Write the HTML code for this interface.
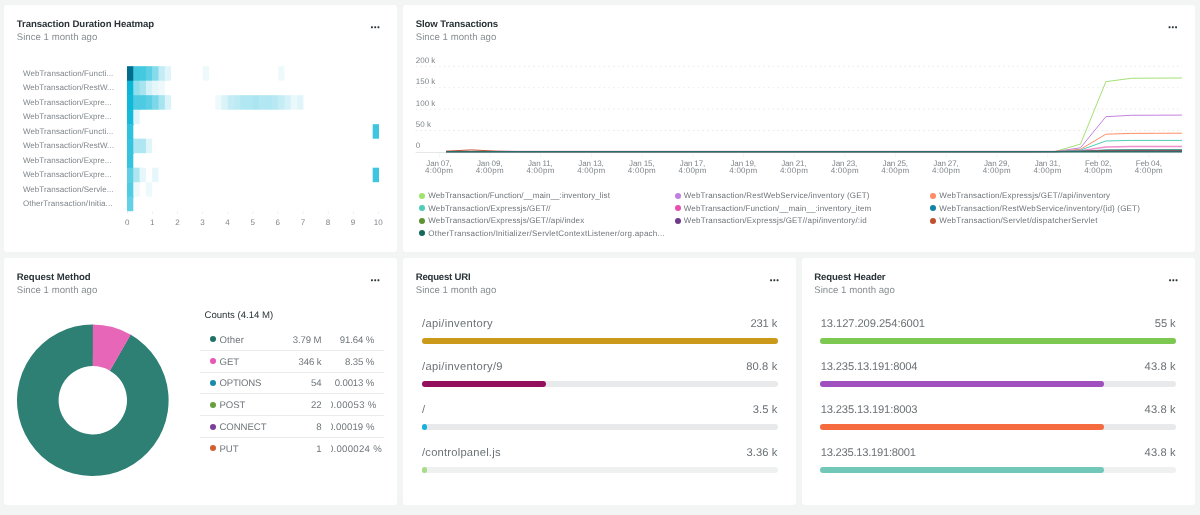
<!DOCTYPE html>
<html lang="en"><head><meta charset="utf-8"><title>Dashboard</title>
<style>
html,body{margin:0;padding:0;}
body{width:1200px;height:515px;background:#f3f4f4;font-family:"Liberation Sans", sans-serif;position:relative;overflow:hidden;}
#root{position:absolute;left:0;top:0;width:1200px;height:515px;will-change:transform;}
.panel{position:absolute;background:#fff;border-radius:3px;overflow:hidden;}
.t{position:absolute;white-space:pre;text-rendering:geometricPrecision;font-family:"Liberation Sans", sans-serif;}
.track{position:absolute;height:6px;border-radius:3px;background:#e8e9ea;}
.fill{position:absolute;left:0;top:0;height:6px;border-radius:3px;}
svg{position:absolute;left:0;top:0;overflow:visible;}
svg.dots{left:auto;top:auto;}
.sep{position:absolute;height:1px;background:#e9ebeb;}
.ld{position:absolute;width:6px;height:6px;border-radius:50%;}
</style></head><body>
<div id="root">
<div class="panel" style="left:4px;top:5px;width:393px;height:246.7px;"><span class="t" style="left:12.70px;top:14px;font-size:9.6px;line-height:11.925px;color:#293338;font-weight:700;letter-spacing:-0.059px;">Transaction Duration Heatmap</span><span class="t" style="left:12.70px;top:27px;font-size:9.6px;line-height:11.925px;color:#878e91;letter-spacing:0.040px;">Since 1 month ago</span><svg class="dots" width="12" height="4" viewBox="0 0 12 4" style="left:367px;top:20px;"><g fill="#2c353a"><rect x="0.00" y="1.25" width="1.9" height="1.9" rx="0.45"/><rect x="3.25" y="1.25" width="1.9" height="1.9" rx="0.45"/><rect x="6.50" y="1.25" width="1.9" height="1.9" rx="0.45"/></g></svg><span class="t" style="left:18.90px;top:64px;font-size:8px;line-height:10.137px;color:#7e8589;letter-spacing:0.080px;">WebTransaction/Functi...</span><span class="t" style="left:18.90px;top:78px;font-size:8px;line-height:10.137px;color:#7e8589;letter-spacing:0.032px;">WebTransaction/RestW...</span><span class="t" style="left:18.90px;top:93px;font-size:8px;line-height:10.137px;color:#7e8589;letter-spacing:0.048px;">WebTransaction/Expre...</span><span class="t" style="left:18.90px;top:107px;font-size:8px;line-height:10.137px;color:#7e8589;letter-spacing:0.048px;">WebTransaction/Expre...</span><span class="t" style="left:18.90px;top:122px;font-size:8px;line-height:10.137px;color:#7e8589;letter-spacing:0.080px;">WebTransaction/Functi...</span><span class="t" style="left:18.90px;top:136px;font-size:8px;line-height:10.137px;color:#7e8589;letter-spacing:0.032px;">WebTransaction/RestW...</span><span class="t" style="left:18.90px;top:151px;font-size:8px;line-height:10.137px;color:#7e8589;letter-spacing:0.048px;">WebTransaction/Expre...</span><span class="t" style="left:18.90px;top:165px;font-size:8px;line-height:10.137px;color:#7e8589;letter-spacing:0.048px;">WebTransaction/Expre...</span><span class="t" style="left:18.90px;top:180px;font-size:8px;line-height:10.137px;color:#7e8589;letter-spacing:0.051px;">WebTransaction/Servle...</span><span class="t" style="left:18.90px;top:194px;font-size:8px;line-height:10.137px;color:#7e8589;letter-spacing:0.089px;">OtherTransaction/Initia...</span><span class="t" style="left:120.97px;top:213px;font-size:8px;line-height:10.137px;color:#7e8589;">0</span><span class="t" style="left:146.07px;top:213px;font-size:8px;line-height:10.137px;color:#7e8589;">1</span><span class="t" style="left:171.17px;top:213px;font-size:8px;line-height:10.137px;color:#7e8589;">2</span><span class="t" style="left:196.27px;top:213px;font-size:8px;line-height:10.137px;color:#7e8589;">3</span><span class="t" style="left:221.37px;top:213px;font-size:8px;line-height:10.137px;color:#7e8589;">4</span><span class="t" style="left:246.47px;top:213px;font-size:8px;line-height:10.137px;color:#7e8589;">5</span><span class="t" style="left:271.57px;top:213px;font-size:8px;line-height:10.137px;color:#7e8589;">6</span><span class="t" style="left:296.67px;top:213px;font-size:8px;line-height:10.137px;color:#7e8589;">7</span><span class="t" style="left:321.77px;top:213px;font-size:8px;line-height:10.137px;color:#7e8589;">8</span><span class="t" style="left:346.87px;top:213px;font-size:8px;line-height:10.137px;color:#7e8589;">9</span><span class="t" style="left:369.75px;top:213px;font-size:8px;line-height:10.137px;color:#7e8589;">10</span><svg width="393" height="246.7" viewBox="4 5 393 246.7"><rect x="127.00" y="66.20" width="6.90" height="15.10" fill="#006d8c"/><rect x="133.30" y="66.20" width="6.90" height="15.10" fill="#3fc8e0"/><rect x="139.60" y="66.20" width="6.90" height="15.10" fill="#44c9e1"/><rect x="145.90" y="66.20" width="6.90" height="15.10" fill="#5ccfe4"/><rect x="152.20" y="66.20" width="6.90" height="15.10" fill="#85dbeb"/><rect x="158.50" y="66.20" width="6.90" height="15.10" fill="#c3ecf4"/><rect x="164.80" y="66.20" width="6.30" height="14.50" fill="#dff5f9"/><rect x="202.60" y="66.20" width="6.30" height="14.50" fill="#eef9fc"/><rect x="278.20" y="66.20" width="6.30" height="14.50" fill="#eef9fc"/><rect x="127.00" y="80.70" width="6.90" height="15.10" fill="#0ab5d6"/><rect x="133.30" y="80.70" width="6.90" height="15.10" fill="#8fdeed"/><rect x="139.60" y="80.70" width="6.90" height="15.10" fill="#a6e4f0"/><rect x="145.90" y="80.70" width="6.90" height="15.10" fill="#d4f1f7"/><rect x="152.20" y="80.70" width="6.90" height="15.10" fill="#e6f7fa"/><rect x="158.50" y="80.70" width="6.30" height="15.10" fill="#edf9fb"/><rect x="127.00" y="95.20" width="6.90" height="15.10" fill="#10b7d7"/><rect x="133.30" y="95.20" width="6.90" height="15.10" fill="#4ccbe2"/><rect x="139.60" y="95.20" width="6.90" height="14.50" fill="#4ccbe2"/><rect x="145.90" y="95.20" width="6.90" height="14.50" fill="#5ccfe4"/><rect x="152.20" y="95.20" width="6.90" height="14.50" fill="#7ad8e9"/><rect x="158.50" y="95.20" width="6.90" height="14.50" fill="#a6e4f0"/><rect x="164.80" y="95.20" width="6.30" height="14.50" fill="#d9f3f8"/><rect x="215.20" y="95.20" width="6.90" height="14.50" fill="#eef9fc"/><rect x="221.50" y="95.20" width="6.90" height="14.50" fill="#daf3f8"/><rect x="227.80" y="95.20" width="6.90" height="14.50" fill="#c3ecf5"/><rect x="234.10" y="95.20" width="6.90" height="14.50" fill="#bcebf4"/><rect x="240.40" y="95.20" width="6.90" height="14.50" fill="#b0e7f2"/><rect x="246.70" y="95.20" width="6.90" height="14.50" fill="#b0e7f2"/><rect x="253.00" y="95.20" width="6.90" height="14.50" fill="#aae5f1"/><rect x="259.30" y="95.20" width="6.90" height="14.50" fill="#b3e8f3"/><rect x="265.60" y="95.20" width="6.90" height="14.50" fill="#b0e7f2"/><rect x="271.90" y="95.20" width="6.90" height="14.50" fill="#b8e9f3"/><rect x="278.20" y="95.20" width="6.90" height="14.50" fill="#c5edf5"/><rect x="284.50" y="95.20" width="6.90" height="14.50" fill="#d5f2f8"/><rect x="290.80" y="95.20" width="6.90" height="14.50" fill="#e8f8fb"/><rect x="297.10" y="95.20" width="6.30" height="14.50" fill="#e0f5fa"/><rect x="127.00" y="109.70" width="6.90" height="15.10" fill="#17b9d8"/><rect x="133.30" y="109.70" width="6.30" height="14.50" fill="#e0f5f9"/><rect x="127.00" y="124.20" width="6.30" height="15.10" fill="#2fc2dc"/><rect x="372.70" y="124.20" width="6.30" height="14.50" fill="#3fc5df"/><rect x="127.00" y="138.70" width="6.90" height="15.10" fill="#35c3dd"/><rect x="133.30" y="138.70" width="6.90" height="14.50" fill="#aee6f1"/><rect x="139.60" y="138.70" width="6.90" height="14.50" fill="#aee6f1"/><rect x="145.90" y="138.70" width="6.30" height="14.50" fill="#e0f5fa"/><rect x="127.00" y="153.20" width="6.30" height="15.10" fill="#35c3dd"/><rect x="127.00" y="167.70" width="6.90" height="15.10" fill="#5ccfe4"/><rect x="133.30" y="167.70" width="6.90" height="15.10" fill="#aee6f1"/><rect x="139.60" y="167.70" width="6.30" height="14.50" fill="#e6f7fb"/><rect x="152.20" y="167.70" width="6.30" height="14.50" fill="#e6f7fb"/><rect x="372.70" y="167.70" width="6.30" height="14.50" fill="#3fc5df"/><rect x="127.00" y="182.20" width="6.90" height="15.10" fill="#50cce2"/><rect x="133.30" y="182.20" width="6.30" height="14.50" fill="#eef9fc"/><rect x="145.90" y="182.20" width="6.30" height="14.50" fill="#eef9fc"/><rect x="127.00" y="196.70" width="6.30" height="14.50" fill="#62d1e5"/><rect x="127.00" y="211.6" width="0.8" height="2" fill="#e3e5e5"/><rect x="152.10" y="211.6" width="0.8" height="2" fill="#e3e5e5"/><rect x="177.20" y="211.6" width="0.8" height="2" fill="#e3e5e5"/><rect x="202.30" y="211.6" width="0.8" height="2" fill="#e3e5e5"/><rect x="227.40" y="211.6" width="0.8" height="2" fill="#e3e5e5"/><rect x="252.50" y="211.6" width="0.8" height="2" fill="#e3e5e5"/><rect x="277.60" y="211.6" width="0.8" height="2" fill="#e3e5e5"/><rect x="302.70" y="211.6" width="0.8" height="2" fill="#e3e5e5"/><rect x="327.80" y="211.6" width="0.8" height="2" fill="#e3e5e5"/><rect x="352.90" y="211.6" width="0.8" height="2" fill="#e3e5e5"/><rect x="378.00" y="211.6" width="0.8" height="2" fill="#e3e5e5"/></svg></div>
<div class="panel" style="left:403px;top:5px;width:791.5px;height:246.7px;"><span class="t" style="left:12.70px;top:14px;font-size:9.6px;line-height:11.925px;color:#293338;font-weight:700;letter-spacing:-0.109px;">Slow Transactions</span><span class="t" style="left:12.70px;top:27px;font-size:9.6px;line-height:11.925px;color:#878e91;letter-spacing:0.040px;">Since 1 month ago</span><svg class="dots" width="12" height="4" viewBox="0 0 12 4" style="left:765px;top:20px;"><g fill="#2c353a"><rect x="0.60" y="1.25" width="1.9" height="1.9" rx="0.45"/><rect x="3.85" y="1.25" width="1.9" height="1.9" rx="0.45"/><rect x="7.10" y="1.25" width="1.9" height="1.9" rx="0.45"/></g></svg><span class="t" style="left:12.80px;top:51px;font-size:8px;line-height:10.137px;color:#7e8589;">200 k</span><span class="t" style="left:12.80px;top:72px;font-size:8px;line-height:10.137px;color:#7e8589;">150 k</span><span class="t" style="left:12.80px;top:94px;font-size:8px;line-height:10.137px;color:#7e8589;">100 k</span><span class="t" style="left:12.80px;top:115px;font-size:8px;line-height:10.137px;color:#7e8589;">50 k</span><span class="t" style="left:12.80px;top:136px;font-size:8px;line-height:10.137px;color:#7e8589;">0</span><span class="t" style="left:23.27px;top:154px;font-size:8px;line-height:10.137px;color:#7e8589;letter-spacing:-0.131px;">Jan 07,</span><span class="t" style="left:22.03px;top:161px;font-size:8px;line-height:10.137px;color:#7e8589;letter-spacing:0.252px;">4:00pm</span><span class="t" style="left:73.97px;top:154px;font-size:8px;line-height:10.137px;color:#7e8589;letter-spacing:-0.131px;">Jan 09,</span><span class="t" style="left:72.73px;top:161px;font-size:8px;line-height:10.137px;color:#7e8589;letter-spacing:0.252px;">4:00pm</span><span class="t" style="left:124.96px;top:154px;font-size:8px;line-height:10.137px;color:#7e8589;letter-spacing:-0.128px;">Jan 11,</span><span class="t" style="left:123.43px;top:161px;font-size:8px;line-height:10.137px;color:#7e8589;letter-spacing:0.252px;">4:00pm</span><span class="t" style="left:175.37px;top:154px;font-size:8px;line-height:10.137px;color:#7e8589;letter-spacing:-0.131px;">Jan 13,</span><span class="t" style="left:174.13px;top:161px;font-size:8px;line-height:10.137px;color:#7e8589;letter-spacing:0.252px;">4:00pm</span><span class="t" style="left:226.07px;top:154px;font-size:8px;line-height:10.137px;color:#7e8589;letter-spacing:-0.131px;">Jan 15,</span><span class="t" style="left:224.83px;top:161px;font-size:8px;line-height:10.137px;color:#7e8589;letter-spacing:0.252px;">4:00pm</span><span class="t" style="left:276.77px;top:154px;font-size:8px;line-height:10.137px;color:#7e8589;letter-spacing:-0.131px;">Jan 17,</span><span class="t" style="left:275.53px;top:161px;font-size:8px;line-height:10.137px;color:#7e8589;letter-spacing:0.252px;">4:00pm</span><span class="t" style="left:327.47px;top:154px;font-size:8px;line-height:10.137px;color:#7e8589;letter-spacing:-0.131px;">Jan 19,</span><span class="t" style="left:326.23px;top:161px;font-size:8px;line-height:10.137px;color:#7e8589;letter-spacing:0.252px;">4:00pm</span><span class="t" style="left:378.17px;top:154px;font-size:8px;line-height:10.137px;color:#7e8589;letter-spacing:-0.131px;">Jan 21,</span><span class="t" style="left:376.93px;top:161px;font-size:8px;line-height:10.137px;color:#7e8589;letter-spacing:0.252px;">4:00pm</span><span class="t" style="left:428.87px;top:154px;font-size:8px;line-height:10.137px;color:#7e8589;letter-spacing:-0.131px;">Jan 23,</span><span class="t" style="left:427.63px;top:161px;font-size:8px;line-height:10.137px;color:#7e8589;letter-spacing:0.252px;">4:00pm</span><span class="t" style="left:479.57px;top:154px;font-size:8px;line-height:10.137px;color:#7e8589;letter-spacing:-0.131px;">Jan 25,</span><span class="t" style="left:478.33px;top:161px;font-size:8px;line-height:10.137px;color:#7e8589;letter-spacing:0.252px;">4:00pm</span><span class="t" style="left:530.27px;top:154px;font-size:8px;line-height:10.137px;color:#7e8589;letter-spacing:-0.131px;">Jan 27,</span><span class="t" style="left:529.03px;top:161px;font-size:8px;line-height:10.137px;color:#7e8589;letter-spacing:0.252px;">4:00pm</span><span class="t" style="left:580.97px;top:154px;font-size:8px;line-height:10.137px;color:#7e8589;letter-spacing:-0.131px;">Jan 29,</span><span class="t" style="left:579.73px;top:161px;font-size:8px;line-height:10.137px;color:#7e8589;letter-spacing:0.252px;">4:00pm</span><span class="t" style="left:631.67px;top:154px;font-size:8px;line-height:10.137px;color:#7e8589;letter-spacing:-0.131px;">Jan 31,</span><span class="t" style="left:630.43px;top:161px;font-size:8px;line-height:10.137px;color:#7e8589;letter-spacing:0.252px;">4:00pm</span><span class="t" style="left:681.94px;top:154px;font-size:8px;line-height:10.137px;color:#7e8589;letter-spacing:-0.136px;">Feb 02,</span><span class="t" style="left:681.13px;top:161px;font-size:8px;line-height:10.137px;color:#7e8589;letter-spacing:0.252px;">4:00pm</span><span class="t" style="left:732.64px;top:154px;font-size:8px;line-height:10.137px;color:#7e8589;letter-spacing:-0.136px;">Feb 04,</span><span class="t" style="left:731.83px;top:161px;font-size:8px;line-height:10.137px;color:#7e8589;letter-spacing:0.252px;">4:00pm</span><svg width="791.5" height="246.7" viewBox="403 5 791.5 246.7" fill="none"><line x1="415.6" y1="66.3" x2="1182" y2="66.3" stroke="#e6e9e9" stroke-width="1" stroke-dasharray="1.5 3.2"/><line x1="415.6" y1="87.7" x2="1182" y2="87.7" stroke="#e6e9e9" stroke-width="1" stroke-dasharray="1.5 3.2"/><line x1="415.6" y1="109.1" x2="1182" y2="109.1" stroke="#e6e9e9" stroke-width="1" stroke-dasharray="1.5 3.2"/><line x1="415.6" y1="130.5" x2="1182" y2="130.5" stroke="#e6e9e9" stroke-width="1" stroke-dasharray="1.5 3.2"/><line x1="415.6" y1="152.5" x2="1182" y2="152.5" stroke="#e6e8e8" stroke-width="1"/><line x1="439.3" y1="153" x2="439.3" y2="157.5" stroke="#f3f5f5" stroke-width="1"/><line x1="490.0" y1="153" x2="490.0" y2="157.5" stroke="#f3f5f5" stroke-width="1"/><line x1="540.7" y1="153" x2="540.7" y2="157.5" stroke="#f3f5f5" stroke-width="1"/><line x1="591.4" y1="153" x2="591.4" y2="157.5" stroke="#f3f5f5" stroke-width="1"/><line x1="642.1" y1="153" x2="642.1" y2="157.5" stroke="#f3f5f5" stroke-width="1"/><line x1="692.8" y1="153" x2="692.8" y2="157.5" stroke="#f3f5f5" stroke-width="1"/><line x1="743.5" y1="153" x2="743.5" y2="157.5" stroke="#f3f5f5" stroke-width="1"/><line x1="794.2" y1="153" x2="794.2" y2="157.5" stroke="#f3f5f5" stroke-width="1"/><line x1="844.9" y1="153" x2="844.9" y2="157.5" stroke="#f3f5f5" stroke-width="1"/><line x1="895.6" y1="153" x2="895.6" y2="157.5" stroke="#f3f5f5" stroke-width="1"/><line x1="946.3" y1="153" x2="946.3" y2="157.5" stroke="#f3f5f5" stroke-width="1"/><line x1="997.0" y1="153" x2="997.0" y2="157.5" stroke="#f3f5f5" stroke-width="1"/><line x1="1047.7" y1="153" x2="1047.7" y2="157.5" stroke="#f3f5f5" stroke-width="1"/><line x1="1098.4" y1="153" x2="1098.4" y2="157.5" stroke="#f3f5f5" stroke-width="1"/><line x1="1149.1" y1="153" x2="1149.1" y2="157.5" stroke="#f3f5f5" stroke-width="1"/><polyline points="446.0,151.6 471.4,151.6 496.8,151.6 522.1,151.6 547.5,151.6 572.9,151.6 598.3,151.6 623.7,151.6 649.0,151.6 674.4,151.6 699.8,151.6 725.2,151.6 750.6,151.6 775.9,151.6 801.3,151.6 826.7,151.6 852.1,151.6 877.5,151.6 902.8,151.6 928.2,151.6 953.6,151.6 979.0,151.6 1004.4,151.6 1029.7,151.6 1055.1,151.5 1080.5,144.1 1105.9,81.7 1131.3,78.3 1156.6,78.1 1182.0,78.0" stroke="#a4e073" stroke-width="1.0" stroke-linejoin="round" opacity="1"/><polyline points="446.0,151.6 471.4,151.6 496.8,151.6 522.1,151.6 547.5,151.6 572.9,151.6 598.3,151.6 623.7,151.6 649.0,151.6 674.4,151.6 699.8,151.6 725.2,151.6 750.6,151.6 775.9,151.6 801.3,151.6 826.7,151.6 852.1,151.6 877.5,151.6 902.8,151.6 928.2,151.6 953.6,151.6 979.0,151.6 1004.4,151.6 1029.7,151.6 1055.1,151.5 1080.5,147.8 1105.9,116.7 1131.3,115.3 1156.6,115.2 1182.0,115.1" stroke="#c37fe0" stroke-width="1.0" stroke-linejoin="round" opacity="1"/><polyline points="446.0,151.6 471.4,151.6 496.8,151.6 522.1,151.6 547.5,151.6 572.9,151.6 598.3,151.6 623.7,151.6 649.0,151.6 674.4,151.6 699.8,151.6 725.2,151.6 750.6,151.6 775.9,151.6 801.3,151.6 826.7,151.6 852.1,151.6 877.5,151.6 902.8,151.6 928.2,151.6 953.6,151.6 979.0,151.6 1004.4,151.6 1029.7,151.6 1055.1,151.5 1080.5,149.3 1105.9,134.2 1131.3,133.4 1156.6,133.3 1182.0,133.2" stroke="#fd8d64" stroke-width="1.0" stroke-linejoin="round" opacity="1"/><polyline points="446.0,151.6 471.4,151.6 496.8,151.6 522.1,151.6 547.5,151.6 572.9,151.6 598.3,151.6 623.7,151.6 649.0,151.6 674.4,151.6 699.8,151.6 725.2,151.6 750.6,151.6 775.9,151.6 801.3,151.6 826.7,151.6 852.1,151.6 877.5,151.6 902.8,151.6 928.2,151.6 953.6,151.6 979.0,151.6 1004.4,151.6 1029.7,151.6 1055.1,151.5 1080.5,150.1 1105.9,141.0 1131.3,140.4 1156.6,140.4 1182.0,140.4" stroke="#4ecdb8" stroke-width="1.0" stroke-linejoin="round" opacity="1"/><polyline points="446.0,151.6 471.4,151.6 496.8,151.6 522.1,151.6 547.5,151.6 572.9,151.6 598.3,151.6 623.7,151.6 649.0,151.6 674.4,151.6 699.8,151.6 725.2,151.6 750.6,151.6 775.9,151.6 801.3,151.6 826.7,151.6 852.1,151.6 877.5,151.6 902.8,151.6 928.2,151.6 953.6,151.6 979.0,151.6 1004.4,151.6 1029.7,151.6 1055.1,151.6 1080.5,150.7 1105.9,147.0 1131.3,146.6 1156.6,146.6 1182.0,146.6" stroke="#ea5fb8" stroke-width="1.5" stroke-linejoin="round" opacity="0.7"/><polyline points="446.0,151.6 471.4,151.6 496.8,151.6 522.1,151.6 547.5,151.6 572.9,151.6 598.3,151.6 623.7,151.6 649.0,151.6 674.4,151.6 699.8,151.6 725.2,151.6 750.6,151.6 775.9,151.6 801.3,151.6 826.7,151.6 852.1,151.6 877.5,151.6 902.8,151.6 928.2,151.6 953.6,151.6 979.0,151.6 1004.4,151.6 1029.7,151.6 1055.1,151.6 1080.5,151.2 1105.9,150.0 1131.3,149.8 1156.6,149.8 1182.0,149.8" stroke="#0f83a3" stroke-width="1.0" stroke-linejoin="round" opacity="1"/><polyline points="446.0,151.6 471.4,151.6 496.8,151.6 522.1,151.6 547.5,151.6 572.9,151.6 598.3,151.6 623.7,151.6 649.0,151.6 674.4,151.6 699.8,151.6 725.2,151.6 750.6,151.6 775.9,151.6 801.3,151.6 826.7,151.6 852.1,151.6 877.5,151.6 902.8,151.6 928.2,151.6 953.6,151.6 979.0,151.6 1004.4,151.6 1029.7,151.6 1055.1,151.6 1080.5,151.3 1105.9,150.3 1131.3,150.2 1156.6,150.2 1182.0,150.2" stroke="#5e9232" stroke-width="1.0" stroke-linejoin="round" opacity="1"/><polyline points="446.0,151.6 471.4,151.6 496.8,151.6 522.1,151.6 547.5,151.6 572.9,151.6 598.3,151.6 623.7,151.6 649.0,151.6 674.4,151.6 699.8,151.6 725.2,151.6 750.6,151.6 775.9,151.6 801.3,151.6 826.7,151.6 852.1,151.6 877.5,151.6 902.8,151.6 928.2,151.6 953.6,151.6 979.0,151.6 1004.4,151.6 1029.7,151.6 1055.1,151.6 1080.5,151.4 1105.9,150.8 1131.3,150.7 1156.6,150.7 1182.0,150.7" stroke="#6f3a8a" stroke-width="1.0" stroke-linejoin="round" opacity="1"/><polyline points="446.0,151.2 471.4,149.9 496.8,151.2 522.1,151.6 547.5,151.6 572.9,151.6 598.3,151.6 623.7,151.6 649.0,151.6 674.4,151.6 699.8,151.6 725.2,151.6 750.6,151.6 775.9,151.6 801.3,151.6 826.7,151.6 852.1,151.6 877.5,151.6 902.8,151.6 928.2,151.6 953.6,151.6 979.0,151.6 1004.4,151.6 1029.7,151.6 1055.1,151.6 1080.5,151.5 1105.9,151.2 1131.3,151.2 1156.6,151.2 1182.0,151.2" stroke="#c0512f" stroke-width="1.0" stroke-linejoin="round" opacity="1"/><polyline points="446.0,151.8 471.4,151.8 496.8,151.8 522.1,151.8 547.5,151.8 572.9,151.8 598.3,151.8 623.7,151.8 649.0,151.8 674.4,151.8 699.8,151.8 725.2,151.8 750.6,151.8 775.9,151.8 801.3,151.8 826.7,151.8 852.1,151.8 877.5,151.8 902.8,151.8 928.2,151.8 953.6,151.8 979.0,151.8 1004.4,151.8 1029.7,151.8 1055.1,151.8 1080.5,151.8 1105.9,151.8 1131.3,151.8 1156.6,151.8 1182.0,151.8" stroke="#2a6e68" stroke-width="1.5" stroke-linejoin="round" opacity="1"/></svg><div class="ld" style="left:16.2px;top:187.5px;background:#a1e36f;"></div><span class="t" style="left:25.30px;top:186px;font-size:8px;line-height:10.137px;color:#6e7478;letter-spacing:0.100px;">WebTransaction/Function/__main__:inventory_list</span><div class="ld" style="left:271.7px;top:187.5px;background:#c07fe0;"></div><span class="t" style="left:280.80px;top:186px;font-size:8px;line-height:10.137px;color:#6e7478;letter-spacing:0.170px;">WebTransaction/RestWebService/inventory (GET)</span><div class="ld" style="left:527.2px;top:187.5px;background:#fd8d64;"></div><span class="t" style="left:536.30px;top:186px;font-size:8px;line-height:10.137px;color:#6e7478;letter-spacing:0.182px;">WebTransaction/Expressjs/GET//api/inventory</span><div class="ld" style="left:16.2px;top:200.0px;background:#4ecdb8;"></div><span class="t" style="left:25.30px;top:199px;font-size:8px;line-height:10.137px;color:#6e7478;letter-spacing:0.152px;">WebTransaction/Expressjs/GET//</span><div class="ld" style="left:271.7px;top:200.0px;background:#e84fb0;"></div><span class="t" style="left:280.80px;top:199px;font-size:8px;line-height:10.137px;color:#6e7478;letter-spacing:0.112px;">WebTransaction/Function/__main__:inventory_item</span><div class="ld" style="left:527.2px;top:200.0px;background:#0f83a3;"></div><span class="t" style="left:536.30px;top:199px;font-size:8px;line-height:10.137px;color:#6e7478;letter-spacing:0.175px;">WebTransaction/RestWebService/inventory/{id} (GET)</span><div class="ld" style="left:16.2px;top:212.5px;background:#5e9232;"></div><span class="t" style="left:25.30px;top:211px;font-size:8px;line-height:10.137px;color:#6e7478;letter-spacing:0.158px;">WebTransaction/Expressjs/GET//api/index</span><div class="ld" style="left:271.7px;top:212.5px;background:#6f3a8a;"></div><span class="t" style="left:280.80px;top:211px;font-size:8px;line-height:10.137px;color:#6e7478;letter-spacing:0.197px;">WebTransaction/Expressjs/GET//api/inventory/:id</span><div class="ld" style="left:527.2px;top:212.5px;background:#c0512f;"></div><span class="t" style="left:536.30px;top:211px;font-size:8px;line-height:10.137px;color:#6e7478;letter-spacing:0.236px;">WebTransaction/Servlet/dispatcherServlet</span><div class="ld" style="left:16.2px;top:225.0px;background:#15695c;"></div><span class="t" style="left:25.30px;top:224px;font-size:8px;line-height:10.137px;color:#6e7478;letter-spacing:0.212px;">OtherTransaction/Initializer/ServletContextListener/org.apach...</span></div>
<div class="panel" style="left:4px;top:258px;width:393px;height:246.5px;"><span class="t" style="left:12.70px;top:14px;font-size:9.6px;line-height:11.925px;color:#293338;font-weight:700;letter-spacing:-0.045px;">Request Method</span><span class="t" style="left:12.70px;top:27px;font-size:9.6px;line-height:11.925px;color:#878e91;letter-spacing:0.040px;">Since 1 month ago</span><svg class="dots" width="12" height="4" viewBox="0 0 12 4" style="left:367px;top:20px;"><g fill="#2c353a"><rect x="0.00" y="1.25" width="1.9" height="1.9" rx="0.45"/><rect x="3.25" y="1.25" width="1.9" height="1.9" rx="0.45"/><rect x="6.50" y="1.25" width="1.9" height="1.9" rx="0.45"/></g></svg><svg width="393" height="246.5" viewBox="4 258 393 246.5"><path d="M130.51,334.54 A75.8,75.8 0 1 1 93.10,324.50 L92.94,366.10 A34.2,34.2 0 1 0 109.81,370.63 Z" fill="#2e8074"/><path d="M92.80,324.50 A75.8,75.8 0 0 1 130.77,334.69 L109.93,370.70 A34.2,34.2 0 0 0 92.80,366.10 Z" fill="#e866b8"/></svg><span class="t" style="left:200.50px;top:52px;font-size:9.6px;line-height:11.925px;color:#2a3434;letter-spacing:-0.006px;">Counts (4.14 M)</span><div class="ld" style="left:205.7px;top:78.2px;background:#1f7263;"></div><span class="t" style="left:215.50px;top:77px;font-size:9.6px;line-height:11.925px;color:#6f767a;letter-spacing:0.120px;">Other</span><span class="t" style="left:288.79px;top:77px;font-size:9.6px;line-height:11.925px;color:#6f767a;letter-spacing:-0.108px;">3.79 M</span><span class="t" style="left:335.85px;top:77px;font-size:9.6px;line-height:11.925px;color:#6f767a;letter-spacing:-0.111px;">91.64 %</span><div class="sep" style="left:196.2px;top:91.8px;width:184.1px;"></div><div class="ld" style="left:205.7px;top:100.1px;background:#e955b5;"></div><span class="t" style="left:215.50px;top:99px;font-size:9.6px;line-height:11.925px;color:#6f767a;letter-spacing:-0.066px;">GET</span><span class="t" style="left:294.53px;top:99px;font-size:9.6px;line-height:11.925px;color:#6f767a;letter-spacing:-0.103px;">346 k</span><span class="t" style="left:341.07px;top:99px;font-size:9.6px;line-height:11.925px;color:#6f767a;letter-spacing:-0.110px;">8.35 %</span><div class="sep" style="left:196.2px;top:113.6px;width:184.1px;"></div><div class="ld" style="left:205.7px;top:121.9px;background:#1a8aa8;"></div><span class="t" style="left:215.50px;top:120px;font-size:9.6px;line-height:11.925px;color:#6f767a;letter-spacing:-0.227px;">OPTIONS</span><span class="t" style="left:307.05px;top:120px;font-size:9.6px;line-height:11.925px;color:#6f767a;letter-spacing:-0.117px;">54</span><span class="t" style="left:330.63px;top:120px;font-size:9.6px;line-height:11.925px;color:#6f767a;letter-spacing:-0.112px;">0.0013 %</span><div class="sep" style="left:196.2px;top:135.4px;width:184.1px;"></div><div class="ld" style="left:205.7px;top:143.8px;background:#66a03c;"></div><span class="t" style="left:215.50px;top:142px;font-size:9.6px;line-height:11.925px;color:#6f767a;letter-spacing:-0.065px;">POST</span><span class="t" style="left:307.05px;top:142px;font-size:9.6px;line-height:11.925px;color:#6f767a;letter-spacing:-0.117px;">22</span><div style="position:absolute;left:327px;top:138px;width:60px;height:18px;overflow:hidden;"><span class="t" style="left:-3.10px;top:4px;font-size:9.6px;line-height:11.925px;color:#6f767a;letter-spacing:0.314px;">0.00053 %</span></div><div class="sep" style="left:196.2px;top:157.2px;width:184.1px;"></div><div class="ld" style="left:205.7px;top:165.6px;background:#7a3f9a;"></div><span class="t" style="left:215.50px;top:164px;font-size:9.6px;line-height:11.925px;color:#6f767a;letter-spacing:-0.068px;">CONNECT</span><span class="t" style="left:312.26px;top:164px;font-size:9.6px;line-height:11.925px;color:#6f767a;letter-spacing:-0.118px;">8</span><div style="position:absolute;left:327px;top:160px;width:60px;height:18px;overflow:hidden;"><span class="t" style="left:-3.10px;top:4px;font-size:9.6px;line-height:11.925px;color:#6f767a;letter-spacing:0.103px;">0.00019 %</span></div><div class="sep" style="left:196.2px;top:179.0px;width:184.1px;"></div><div class="ld" style="left:205.7px;top:187.4px;background:#d06030;"></div><span class="t" style="left:215.50px;top:186px;font-size:9.6px;line-height:11.925px;color:#6f767a;letter-spacing:-0.064px;">PUT</span><span class="t" style="left:312.26px;top:186px;font-size:9.6px;line-height:11.925px;color:#6f767a;letter-spacing:-0.118px;">1</span><div style="position:absolute;left:327px;top:182px;width:60px;height:18px;overflow:hidden;"><span class="t" style="left:-3.10px;top:4px;font-size:9.6px;line-height:11.925px;color:#6f767a;letter-spacing:0.288px;">0.000024 %</span></div></div>
<div class="panel" style="left:403px;top:258px;width:393px;height:246.5px;"><span class="t" style="left:12.70px;top:14px;font-size:9.6px;line-height:11.925px;color:#293338;font-weight:700;letter-spacing:-0.213px;">Request URI</span><span class="t" style="left:12.70px;top:27px;font-size:9.6px;line-height:11.925px;color:#878e91;letter-spacing:0.040px;">Since 1 month ago</span><svg class="dots" width="12" height="4" viewBox="0 0 12 4" style="left:367px;top:20px;"><g fill="#2c353a"><rect x="0.10" y="1.25" width="1.9" height="1.9" rx="0.45"/><rect x="3.35" y="1.25" width="1.9" height="1.9" rx="0.45"/><rect x="6.60" y="1.25" width="1.9" height="1.9" rx="0.45"/></g></svg><span class="t" style="left:19.00px;top:59px;font-size:11.2px;line-height:14.912px;color:#6b7276;letter-spacing:0.311px;">/api/inventory</span><span class="t" style="left:347.39px;top:59px;font-size:11.2px;line-height:14.912px;color:#6b7276;letter-spacing:-0.115px;">231 k</span><div class="track" style="left:19.0px;top:80.0px;width:355.7px;background:#e8e9ea;"><div class="fill" style="width:355.7px;background:#cc9a1a;"></div></div><span class="t" style="left:19.00px;top:102px;font-size:11.2px;line-height:14.912px;color:#6b7276;letter-spacing:0.314px;">/api/inventory/9</span><span class="t" style="left:343.14px;top:102px;font-size:11.2px;line-height:14.912px;color:#6b7276;letter-spacing:0.136px;">80.8 k</span><div class="track" style="left:19.0px;top:122.9px;width:355.7px;background:#e8e9ea;"><div class="fill" style="width:123.9px;background:#94105e;"></div></div><span class="t" style="left:19.00px;top:145px;font-size:11.2px;line-height:14.912px;color:#6b7276;letter-spacing:0.491px;">/</span><span class="t" style="left:349.77px;top:145px;font-size:11.2px;line-height:14.912px;color:#6b7276;letter-spacing:0.067px;">3.5 k</span><div class="track" style="left:19.0px;top:165.8px;width:355.7px;background:#e8e9ea;"><div class="fill" style="width:5.4px;background:#1ab0dd;"></div></div><span class="t" style="left:19.00px;top:188px;font-size:11.2px;line-height:14.912px;color:#6b7276;letter-spacing:0.216px;">/controlpanel.js</span><span class="t" style="left:343.39px;top:188px;font-size:11.2px;line-height:14.912px;color:#6b7276;letter-spacing:0.086px;">3.36 k</span><div class="track" style="left:19.0px;top:208.7px;width:355.7px;background:#eff0f0;"><div class="fill" style="width:5.4px;background:#a8dc88;"></div></div></div>
<div class="panel" style="left:801.5px;top:258px;width:393px;height:246.5px;"><span class="t" style="left:12.70px;top:14px;font-size:9.6px;line-height:11.925px;color:#293338;font-weight:700;letter-spacing:-0.125px;">Request Header</span><span class="t" style="left:12.70px;top:27px;font-size:9.6px;line-height:11.925px;color:#878e91;letter-spacing:0.040px;">Since 1 month ago</span><svg class="dots" width="12" height="4" viewBox="0 0 12 4" style="left:367px;top:20px;"><g fill="#2c353a"><rect x="0.10" y="1.25" width="1.9" height="1.9" rx="0.45"/><rect x="3.35" y="1.25" width="1.9" height="1.9" rx="0.45"/><rect x="6.60" y="1.25" width="1.9" height="1.9" rx="0.45"/></g></svg><span class="t" style="left:19.20px;top:59px;font-size:11.2px;line-height:14.912px;color:#6b7276;letter-spacing:-0.077px;">13.127.209.254:6001</span><span class="t" style="left:353.34px;top:59px;font-size:11.2px;line-height:14.912px;color:#6b7276;letter-spacing:-0.164px;">55 k</span><div class="track" style="left:18.6px;top:80.0px;width:355.8px;background:#e8e9ea;"><div class="fill" style="width:355.8px;background:#7dc850;"></div></div><span class="t" style="left:19.20px;top:102px;font-size:11.2px;line-height:14.912px;color:#6b7276;letter-spacing:-0.158px;">13.235.13.191:8004</span><span class="t" style="left:343.09px;top:102px;font-size:11.2px;line-height:14.912px;color:#6b7276;letter-spacing:0.086px;">43.8 k</span><div class="track" style="left:18.6px;top:122.9px;width:355.8px;background:#e8e9ea;"><div class="fill" style="width:283.6px;background:#a050bf;"></div></div><span class="t" style="left:19.20px;top:145px;font-size:11.2px;line-height:14.912px;color:#6b7276;letter-spacing:-0.158px;">13.235.13.191:8003</span><span class="t" style="left:343.09px;top:145px;font-size:11.2px;line-height:14.912px;color:#6b7276;letter-spacing:0.086px;">43.8 k</span><div class="track" style="left:18.6px;top:165.8px;width:355.8px;background:#e8e9ea;"><div class="fill" style="width:283.6px;background:#f56a3e;"></div></div><span class="t" style="left:19.20px;top:188px;font-size:11.2px;line-height:14.912px;color:#6b7276;letter-spacing:-0.253px;">13.235.13.191:8001</span><span class="t" style="left:343.09px;top:188px;font-size:11.2px;line-height:14.912px;color:#6b7276;letter-spacing:0.086px;">43.8 k</span><div class="track" style="left:18.6px;top:208.7px;width:355.8px;background:#eff0f0;"><div class="fill" style="width:283.6px;background:#72c8b8;"></div></div></div>
</div>
</body></html>
